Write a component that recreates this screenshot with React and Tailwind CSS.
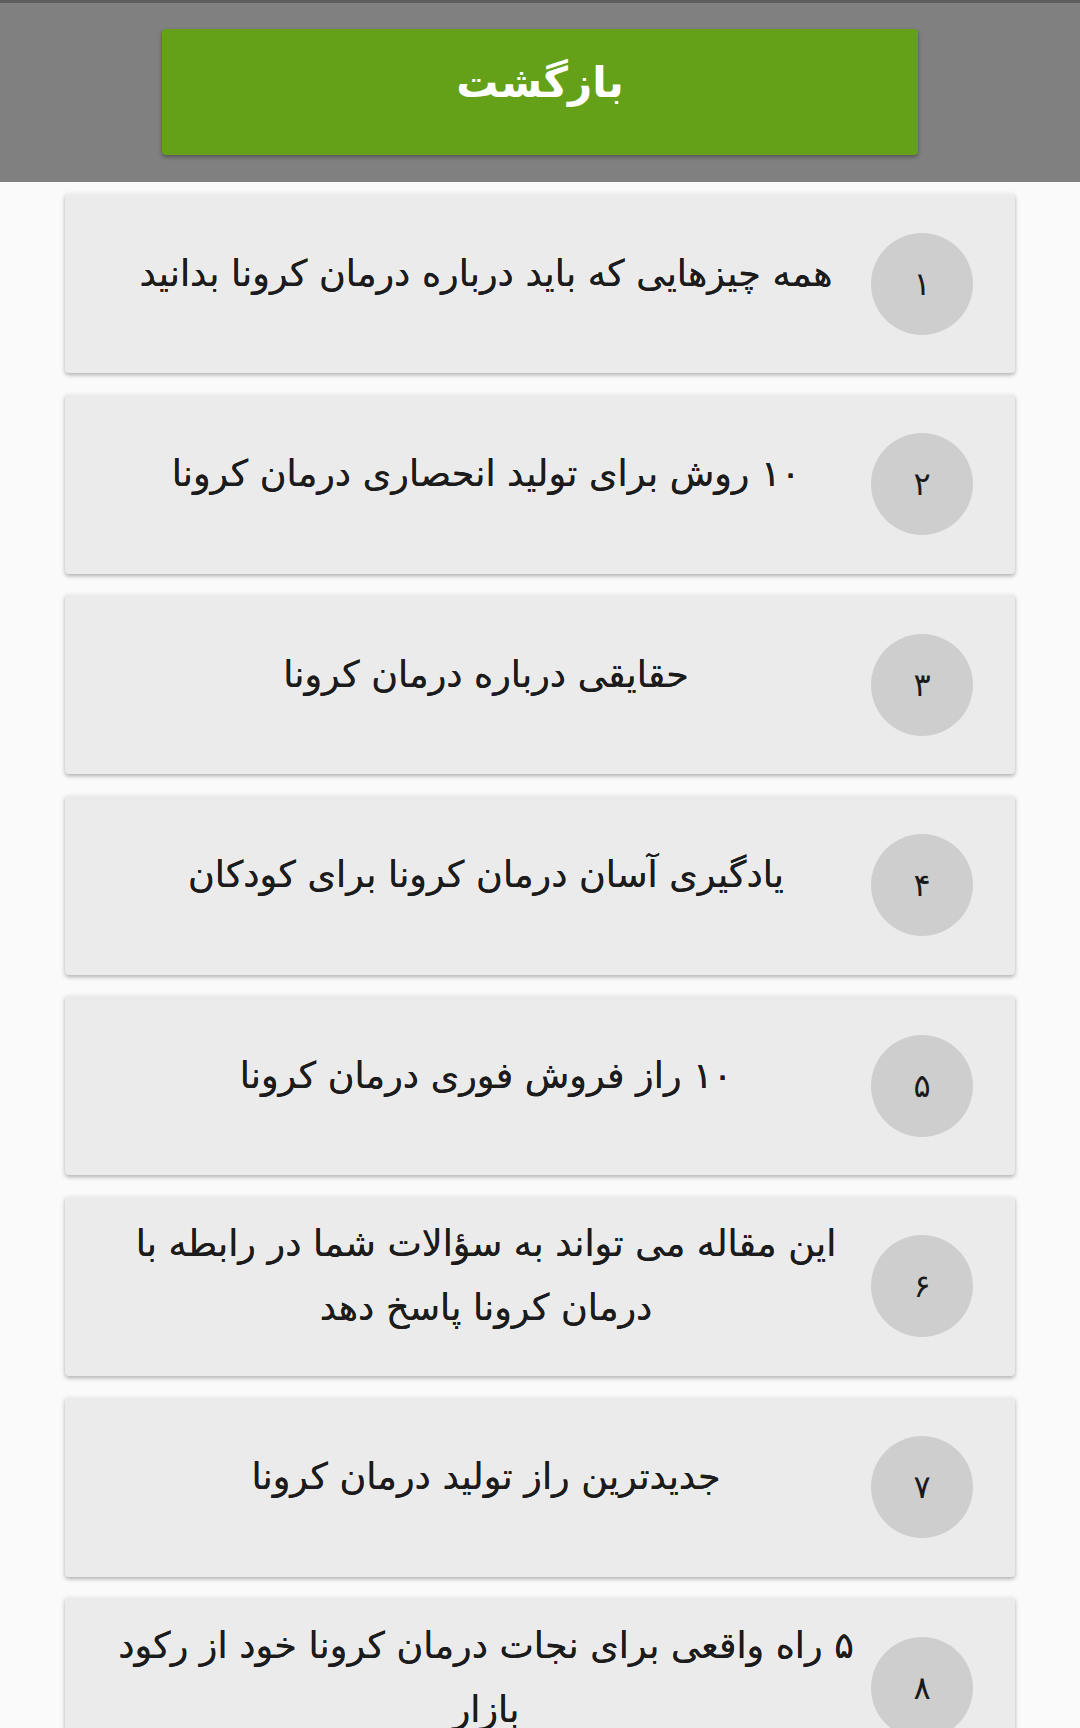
import React from "react";

const items = [
  { n: "۱", t: ["همه چیزهایی که باید درباره درمان کرونا بدانید"] },
  { n: "۲", t: ["۱۰ روش برای تولید انحصاری درمان کرونا"] },
  { n: "۳", t: ["حقایقی درباره درمان کرونا"] },
  { n: "۴", t: ["یادگیری آسان درمان کرونا برای کودکان"] },
  { n: "۵", t: ["۱۰ راز فروش فوری درمان کرونا"] },
  { n: "۶", t: ["این مقاله می تواند به سؤالات شما در رابطه با", "درمان کرونا پاسخ دهد"] },
  { n: "۷", t: ["جدیدترین راز تولید درمان کرونا"] },
  { n: "۸", t: ["۵ راه واقعی برای نجات درمان کرونا خود از رکود", "بازار"] },
];

export default function App() {
  return (
    <div
      dir="rtl"
      className="w-[1080px] min-h-[1728px] bg-[#fafafa] overflow-hidden"
      style={{ fontFamily: '"DejaVu Sans", "Noto Sans", sans-serif' }}
    >
      <div className="h-[182px] bg-[#808080] border-t-[3px] border-[#5e5e5e] pt-[26px]">
        <div className="mx-auto w-[756px] h-[126px] bg-[#64a018] rounded-[4px] shadow-[0_2px_4px_rgba(0,0,0,0.35)] flex justify-center items-center pb-[18px]">
          <span className="text-white text-[42px] font-bold leading-none">بازگشت</span>
        </div>
      </div>
      <div className="pt-[11px] px-[65px] flex flex-col gap-[20.6px]">
        {items.map((it) => (
          <div
            key={it.n}
            className="h-[180px] shrink-0 bg-[#ebebeb] rounded-[4px] shadow-[0_2px_4px_rgba(0,0,0,0.3)] border-t border-[#f2f2f2] flex items-center pr-[42px] pl-[36px]"
          >
            <div className="w-[102px] h-[102px] rounded-full bg-[#cecece] flex items-center justify-center shrink-0">
              <span className="text-[32px] text-[#1a1a1a] leading-none">{it.n}</span>
            </div>
            <div className="flex-1 text-center text-[36.5px] leading-[64px] text-[#1c1c1c] pb-[20px] [text-shadow:0_0_0.6px_#1c1c1c]">
              {it.t.map((l, i) => (
                <div key={i} className="whitespace-nowrap">{l}</div>
              ))}
            </div>
          </div>
        ))}
      </div>
    </div>
  );
}
